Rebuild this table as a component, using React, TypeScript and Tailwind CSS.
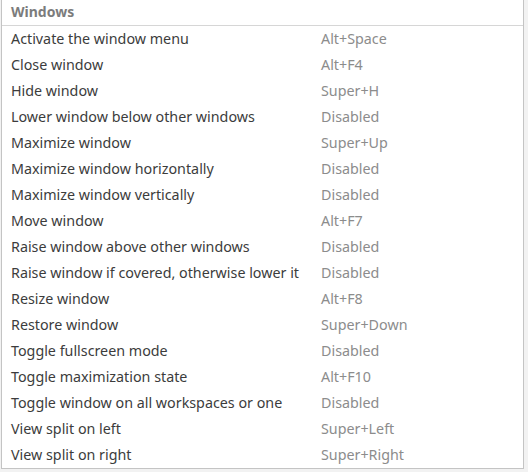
const rows: [string, string][] = [
  ["Activate the window menu", "Alt+Space"],
  ["Close window", "Alt+F4"],
  ["Hide window", "Super+H"],
  ["Lower window below other windows", "Disabled"],
  ["Maximize window", "Super+Up"],
  ["Maximize window horizontally", "Disabled"],
  ["Maximize window vertically", "Disabled"],
  ["Move window", "Alt+F7"],
  ["Raise window above other windows", "Disabled"],
  ["Raise window if covered, otherwise lower it", "Disabled"],
  ["Resize window", "Alt+F8"],
  ["Restore window", "Super+Down"],
  ["Toggle fullscreen mode", "Disabled"],
  ["Toggle maximization state", "Alt+F10"],
  ["Toggle window on all workspaces or one", "Disabled"],
  ["View split on left", "Super+Left"],
  ["View split on right", "Super+Right"],
];

export default function App() {
  return (
    <div className="h-[472px] w-[528px] bg-[#f2f2f2] pl-px pr-1 font-['Noto_Sans',sans-serif]">
      <div className="w-[523px] border-x border-b border-[#c4c4c4] bg-white">
        <div className="flex h-[26px] items-center border-b border-[#d6d6d6] pb-[3px] pl-[9px] text-[14px] font-bold text-[#7c7c7c]">
          Windows
        </div>
        {rows.map(([name, key]) => (
          <div key={name} className="flex h-[26px] items-center pb-px text-[14.3px]">
            <div className="w-[319px] pl-[9px] text-[#3c3c3c]">{name}</div>
            <div className="text-[#8c8c8c]">{key}</div>
          </div>
        ))}
      </div>
    </div>
  );
}
